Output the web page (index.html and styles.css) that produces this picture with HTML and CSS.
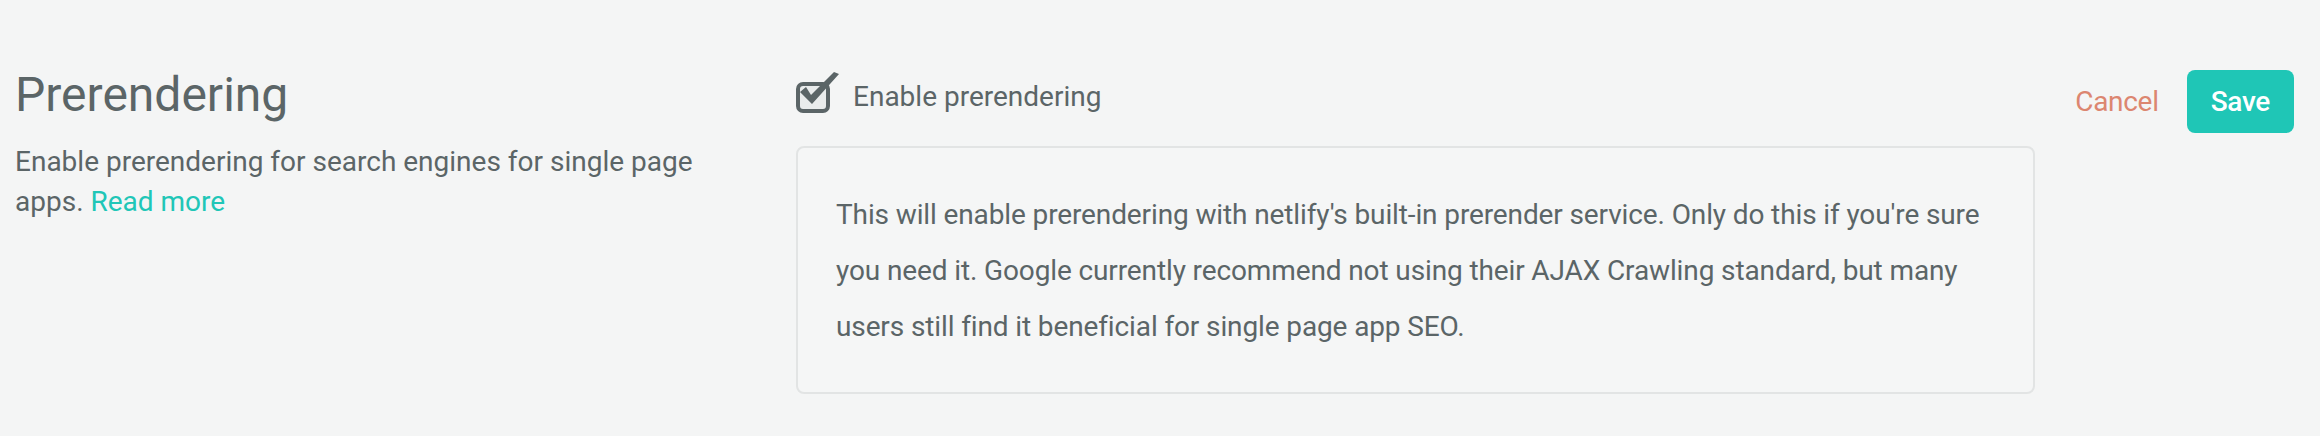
FILE: index.html
```html
<!DOCTYPE html>
<html lang="en">
<head>
<meta charset="utf-8">
<title>Prerendering</title>
<link rel="stylesheet" href="styles.css">
</head>
<body>
<section class="setting">
  <div class="setting-info">
    <h2 class="setting-title">Prerendering</h2>
    <p class="setting-desc">Enable prerendering for search engines for single page apps. <a class="link" href="#">Read more</a></p>
  </div>
  <div class="setting-body">
    <label class="check-row">
      <svg class="check-icon" width="44" height="44" viewBox="0 0 44 44" aria-hidden="true">
        <rect x="2" y="14" width="30" height="27" rx="5" ry="5" fill="#e9ecec" stroke="#5b6567" stroke-width="4"/>
        <polygon points="4,22 10,17 15,25 38,2 43,4 16,34" fill="#5b6567"/>
      </svg>
      <span class="check-label">Enable prerendering</span>
    </label>
    <div class="note">
      <p>This will enable prerendering with netlify's built-in prerender service. Only do this if you're sure you need it. Google currently recommend not using their AJAX Crawling standard, but many users still find it beneficial for single page app SEO.</p>
    </div>
  </div>
  <div class="setting-actions">
    <a class="btn-cancel" href="#">Cancel</a>
    <button class="btn-save" type="button">Save</button>
  </div>
</section>
</body>
</html>
```
FILE: styles.css
```css
html, body {
  margin: 0;
  padding: 0;
}
body {
  background: #f4f5f5;
  color: #5b6567;
  font-family: Roboto, "Liberation Sans", Arial, sans-serif;
  width: 2320px;
  height: 436px;
  overflow: hidden;
}
.setting {
  display: flex;
  align-items: flex-start;
  padding: 67px 26px 0 15px;
}
.setting-info {
  width: 740px;
  flex: 0 0 740px;
  margin-right: 41px;
}
.setting-title {
  margin: 0;
  font-size: 48px;
  line-height: 56px;
  font-weight: 400;
  color: #5b6567;
}
.setting-desc {
  margin: 19px 0 0;
  font-size: 28px;
  line-height: 40px;
}
.link {
  color: #20c6b7;
  text-decoration: none;
}
.setting-body {
  flex: 1 1 auto;
  margin-top: 10px;
}
.check-row {
  display: flex;
  align-items: center;
  height: 40px;
}
.check-icon {
  display: block;
  margin-top: -10px;
  flex: 0 0 44px;
}
.check-label {
  margin-left: 13px;
  font-size: 28px;
  line-height: 40px;
}
.note {
  margin-top: 29px;
  border: 2px solid #e2e4e4;
  border-radius: 8px;
  background: #f5f6f6;
  padding: 39px 28px 37px 38px;
}
.note p {
  margin: 0;
  font-size: 28px;
  line-height: 56px;
  letter-spacing: -0.12px;
}
.setting-actions {
  display: flex;
  align-items: center;
  margin-top: 3px;
  margin-left: 40px;
}
.btn-cancel {
  color: #dc8670;
  font-size: 28px;
  letter-spacing: -0.3px;
  text-decoration: none;
  margin-right: 28px;
}
.btn-save {
  height: 63px;
  padding: 0 24px;
  border: 0;
  border-radius: 8px;
  background: #1fc6b6;
  color: #ffffff;
  font-family: Roboto, "Liberation Sans", Arial, sans-serif;
  font-size: 28px;
  font-weight: 500;
  letter-spacing: -0.3px;
  line-height: 63px;
  cursor: pointer;
}
```
